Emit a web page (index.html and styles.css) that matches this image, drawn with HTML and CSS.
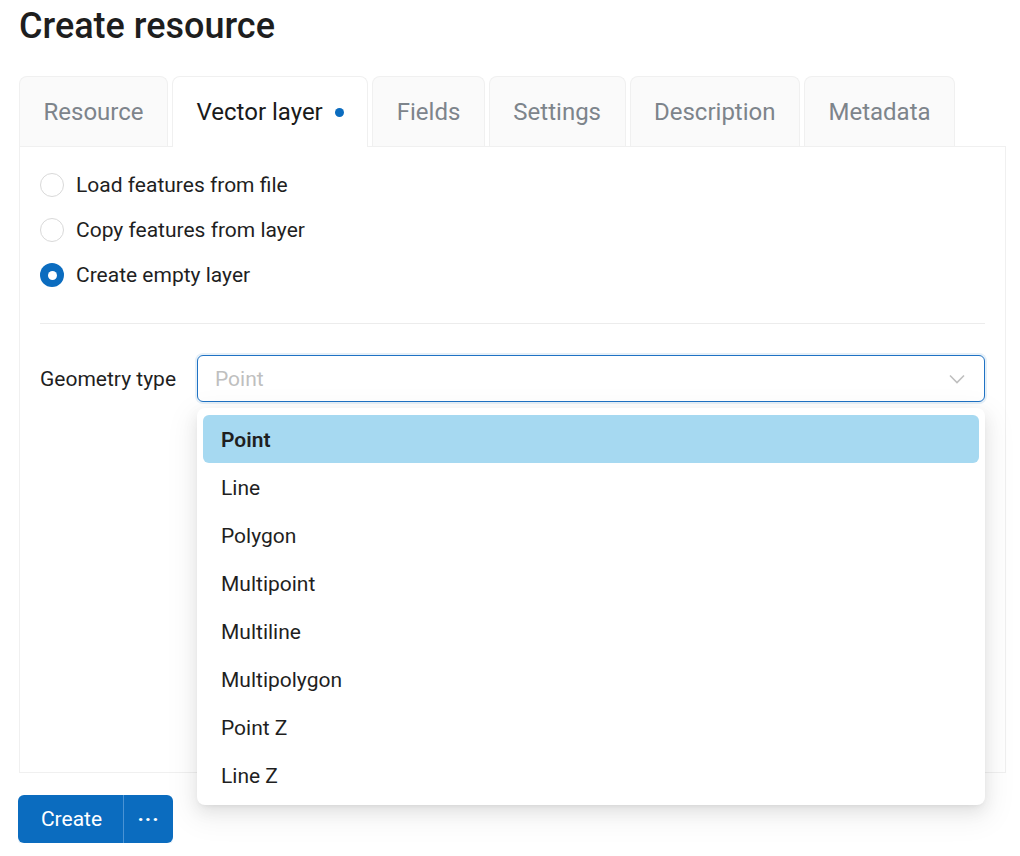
FILE: index.html
```html
<!DOCTYPE html>
<html lang="en">

<head>
    <meta charset="UTF-8">
    <title>Create resource</title>
    <link rel="stylesheet" href="styles.css">
</head>

<body>
    <div class="page">
        <h1 class="page-title">Create resource</h1>

        <div class="tabs">
            <div class="tab">Resource</div>
            <div class="tab tab-active">Vector layer <span class="tab-dot"></span></div>
            <div class="tab">Fields</div>
            <div class="tab">Settings</div>
            <div class="tab">Description</div>
            <div class="tab">Metadata</div>
        </div>

        <section class="panel">
            <div class="radio-group">
                <label class="radio"><span class="radio-circle"></span>Load features from file</label>
                <label class="radio"><span class="radio-circle"></span>Copy features from layer</label>
                <label class="radio radio-checked"><span class="radio-circle"></span>Create empty layer</label>
            </div>

            <hr class="divider">

            <div class="form-row">
                <div class="form-label">Geometry type</div>
                <div class="select-wrap">
                    <div class="select">
                        <span class="select-placeholder">Point</span>
                        <svg class="select-arrow" width="16" height="10" viewBox="0 0 16 10">
                            <path d="M1 1.5 L8 8.5 L15 1.5" fill="none" stroke="#bfbfbf" stroke-width="1.6" />
                        </svg>
                    </div>
                    <ul class="dropdown">
                        <li class="option option-selected">Point</li>
                        <li class="option">Line</li>
                        <li class="option">Polygon</li>
                        <li class="option">Multipoint</li>
                        <li class="option">Multiline</li>
                        <li class="option">Multipolygon</li>
                        <li class="option">Point Z</li>
                        <li class="option">Line Z</li>
                    </ul>
                </div>
            </div>
        </section>

        <div class="actions">
            <button class="btn-main">Create</button>
            <button class="btn-more">&middot;&middot;&middot;</button>
        </div>
    </div>
</body>

</html>
```

FILE: styles.css
```css
body {
    margin: 0;
    font-family: Roboto, "Liberation Sans", sans-serif;
    color: #1f1f1f;
    background: #fff;
}

.page {
    padding: 5px 14px 0 18px;
}

.page-title {
    margin: 0 0 29px 1px;
    font-size: 36px;
    line-height: 42px;
    font-weight: 500;
    color: #1e1e1e;
}

/* Tabs */
.tabs {
    display: flex;
    gap: 4px;
    margin-left: 1px;
}

.tab {
    height: 69px;
    padding: 0 23.5px;
    display: flex;
    align-items: center;
    font-size: 24px;
    color: #7d848b;
    background: #fafafa;
    border: 1px solid #f0f0f0;
    border-bottom: none;
    border-radius: 8px 8px 0 0;
}

.tab-active {
    position: relative;
    height: 70px;
    margin-bottom: -1px;
    background: #fff;
    color: #1a1a1a;
    z-index: 1;
}

.tab-dot {
    width: 9px;
    height: 9px;
    margin-left: 12px;
    border-radius: 50%;
    background: #0b6cbf;
}

/* Panel */
.panel {
    height: 627px;
    box-sizing: border-box;
    margin-left: 1px;
    padding: 23px 20px 0 20px;
    border: 1px solid #f0f0f0;
}

.radio-group {
    display: flex;
    flex-direction: column;
    gap: 15px;
}

.radio {
    display: flex;
    align-items: center;
    gap: 12px;
    height: 30px;
    font-size: 21px;
    color: #1f1f1f;
}

.radio-circle {
    width: 22px;
    height: 22px;
    border: 1px solid #d9d9d9;
    border-radius: 50%;
    background: #fff;
    display: flex;
    align-items: center;
    justify-content: center;
}

.radio-checked .radio-circle {
    width: 24px;
    height: 24px;
    border: none;
    background: #0b6cbf;
}

.radio-checked .radio-circle::after {
    content: "";
    width: 9px;
    height: 9px;
    border-radius: 50%;
    background: #fff;
}

.divider {
    margin: 33px 0 31px;
    border: none;
    border-top: 1px solid #ececec;
}

/* Geometry type row */
.form-row {
    display: flex;
    align-items: center;
}

.form-label {
    width: 157px;
    flex-shrink: 0;
    font-size: 21px;
    color: #1f1f1f;
}

.select-wrap {
    position: relative;
    flex: 1;
}

.select {
    height: 47px;
    box-sizing: border-box;
    padding: 0 17px;
    display: flex;
    align-items: center;
    justify-content: space-between;
    border: 1px solid #1f72c4;
    border-radius: 6px;
    box-shadow: 0 0 0 2px rgba(11, 108, 191, 0.1);
    background: #fff;
}

.select-placeholder {
    font-size: 21px;
    color: #bfbfbf;
}

.select-arrow {
    margin-right: 2px;
}

.dropdown {
    position: absolute;
    top: 53px;
    left: 0;
    right: 0;
    margin: 0;
    padding: 7px 6px 6px;
    list-style: none;
    background: #fff;
    border-radius: 8px;
    box-shadow: 0 6px 16px rgba(0, 0, 0, 0.08), 0 3px 6px -4px rgba(0, 0, 0, 0.12), 0 9px 28px 8px rgba(0, 0, 0, 0.05);
    z-index: 10;
}

.option {
    height: 48px;
    padding: 1px 18px 0;
    box-sizing: border-box;
    display: flex;
    align-items: center;
    font-size: 21px;
    color: #1f1f1f;
    border-radius: 6px;
}

.option-selected {
    background: #a6d9f1;
    font-weight: 600;
}

/* Buttons */
.actions {
    display: flex;
    margin-top: 22px;
}

.actions button {
    height: 48px;
    border: none;
    background: #0b6cbf;
    color: #fff;
    font-family: inherit;
    font-size: 21px;
    cursor: pointer;
    box-shadow: 0 2px 0 rgba(5, 110, 200, 0.1);
}

.btn-main {
    width: 106px;
    padding: 0 0 0 2px;
    border-radius: 6px 0 0 6px;
    border-right: 1px solid #4a93d4 !important;
}

.btn-more {
    width: 49px;
    border-radius: 0 6px 6px 0;
    font-size: 20px;
    letter-spacing: 1px;
    font-weight: bold;
}
```
